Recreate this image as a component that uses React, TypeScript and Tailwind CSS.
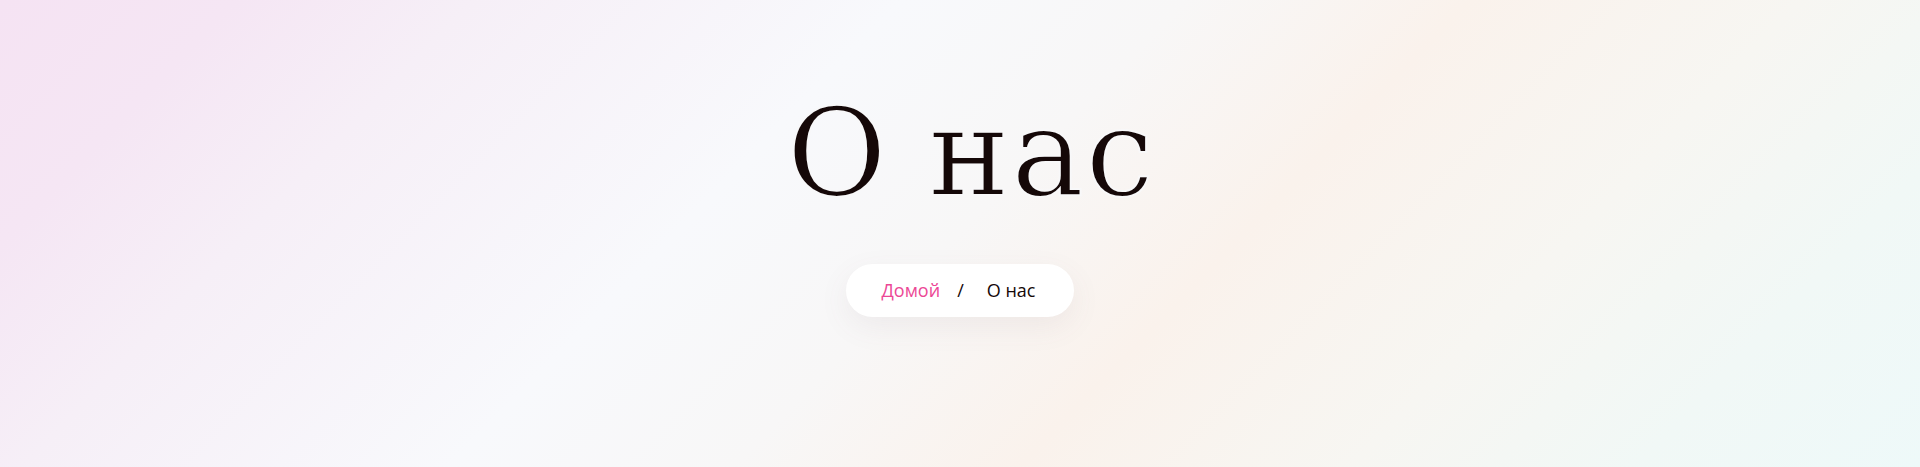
import React from "react";

export default function App() {
  return (
    <div className="w-full h-[467px] overflow-hidden bg-[linear-gradient(134deg,#f5e3f3_0%,#f5e6f4_10%,#f6eff7_20%,#f8f9fc_38%,#f8f7f7_50%,#faf2ec_62%,#f7f6f2_76%,#f1f8f6_88%,#eef9f9_100%)]">
      <div className="flex flex-col items-center pt-[92px]">
        <h1 className="pl-[22px] font-['DejaVu_Serif',serif] text-[122px] leading-none text-[#150808] font-normal tracking-[1.5px] [-webkit-text-stroke:2px_#f8f8f9]">
          О нас
        </h1>
        <nav className="mt-[50px] h-[53px] pl-[36px] pr-[39px] flex items-center rounded-full bg-white shadow-[0_10px_30px_rgba(120,90,100,0.08)] font-['Open_Sans',sans-serif] text-[18px]">
          <a className="text-[#ec4795]">Домой</a>
          <span className="ml-[17px] mr-[23px] text-[#150808]">/</span>
          <span className="text-[#150808]">О нас</span>
        </nav>
      </div>
    </div>
  );
}
